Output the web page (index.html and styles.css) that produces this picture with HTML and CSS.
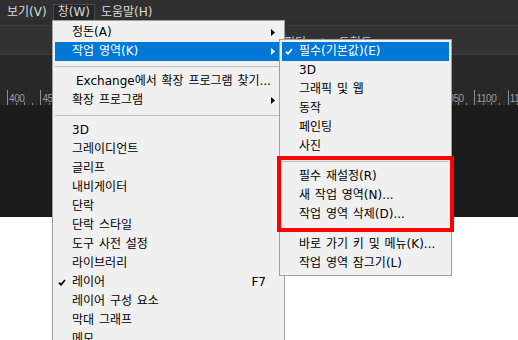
FILE: index.html
```html
<!DOCTYPE html>
<html lang="ko">
<head>
    <meta charset="UTF-8">
    <meta name="viewport" content="width=device-width, initial-scale=1.0">
    <title>창 메뉴 - 작업 영역</title>
    <link rel="stylesheet" href="styles.css">
</head>
<body>
    <div class="app">
        <div class="menubar">
            <span class="menubar-item">보기(V)</span>
            <span class="menubar-item is-open">창(W)</span>
            <span class="menubar-item">도움말(H)</span>
        </div>
        <div class="toolbar-gap"></div>
        <div class="options-bar">
            <span class="options-text">필터</span>
            <span class="options-dot">●</span>
            <span class="options-text">도형도</span>
        </div>
        <div class="tab-area"></div>
        <div class="ruler">
            <span class="ruler-seg">400</span>
            <span class="ruler-seg">450</span>
            <span class="ruler-seg">500</span>
            <span class="ruler-seg">550</span>
            <span class="ruler-seg">600</span>
            <span class="ruler-seg">650</span>
            <span class="ruler-seg">700</span>
            <span class="ruler-seg">750</span>
            <span class="ruler-seg">800</span>
            <span class="ruler-seg">850</span>
            <span class="ruler-seg">900</span>
            <span class="ruler-seg">950</span>
            <span class="ruler-seg">1000</span>
            <span class="ruler-seg">1050</span>
            <span class="ruler-seg">1100</span>
            <span class="ruler-seg">1150</span>
        </div>
        <div class="pasteboard"></div>
        <div class="canvas"></div>
    </div>

    <!-- 창(W) 드롭다운 -->
    <div class="menu menu-main">
        <div class="menu-item"><span class="check"></span><span class="label">정돈(A)</span><svg class="arrow" width="4" height="7" viewBox="0 0 4 7"><path d="M0 0L4 3.5L0 7z"/></svg></div>
        <div class="menu-item is-active"><span class="check"></span><span class="label">작업 영역(K)</span><svg class="arrow" width="4" height="7" viewBox="0 0 4 7"><path d="M0 0L4 3.5L0 7z"/></svg></div>
        <div class="menu-sep"></div>
        <div class="menu-item"><span class="check"></span><span class="label indent">Exchange에서 확장 프로그램 찾기...</span></div>
        <div class="menu-item"><span class="check"></span><span class="label">확장 프로그램</span><svg class="arrow" width="4" height="7" viewBox="0 0 4 7"><path d="M0 0L4 3.5L0 7z"/></svg></div>
        <div class="menu-sep"></div>
        <div class="menu-item"><span class="check"></span><span class="label">3D</span></div>
        <div class="menu-item"><span class="check"></span><span class="label">그레이디언트</span></div>
        <div class="menu-item"><span class="check"></span><span class="label">글리프</span></div>
        <div class="menu-item"><span class="check"></span><span class="label">내비게이터</span></div>
        <div class="menu-item"><span class="check"></span><span class="label">단락</span></div>
        <div class="menu-item"><span class="check"></span><span class="label">단락 스타일</span></div>
        <div class="menu-item"><span class="check"></span><span class="label">도구 사전 설정</span></div>
        <div class="menu-item"><span class="check"></span><span class="label">라이브러리</span></div>
        <div class="menu-item">
            <span class="check"><svg width="8" height="7" viewBox="0 0 8 7"><path d="M1 3.6L3 5.8L7 1" fill="none" stroke="currentColor" stroke-width="1.7"/></svg></span>
            <span class="label">레이어</span><span class="shortcut">F7</span>
        </div>
        <div class="menu-item"><span class="check"></span><span class="label">레이어 구성 요소</span></div>
        <div class="menu-item"><span class="check"></span><span class="label">막대 그래프</span></div>
        <div class="menu-item"><span class="check"></span><span class="label">메모</span></div>
    </div>

    <!-- 작업 영역 하위 메뉴 -->
    <div class="menu menu-sub">
        <div class="menu-item is-active">
            <span class="check"><svg width="8" height="7" viewBox="0 0 8 7"><path d="M1 3.6L3 5.8L7 1" fill="none" stroke="currentColor" stroke-width="1.7"/></svg></span>
            <span class="label">필수(기본값)(E)</span>
        </div>
        <div class="menu-item"><span class="check"></span><span class="label">3D</span></div>
        <div class="menu-item"><span class="check"></span><span class="label">그래픽 및 웹</span></div>
        <div class="menu-item"><span class="check"></span><span class="label">동작</span></div>
        <div class="menu-item"><span class="check"></span><span class="label">페인팅</span></div>
        <div class="menu-item"><span class="check"></span><span class="label">사진</span></div>
        <div class="menu-sep"></div>
        <div class="menu-item"><span class="check"></span><span class="label">필수 재설정(R)</span></div>
        <div class="menu-item"><span class="check"></span><span class="label">새 작업 영역(N)...</span></div>
        <div class="menu-item"><span class="check"></span><span class="label">작업 영역 삭제(D)...</span></div>
        <div class="menu-sep"></div>
        <div class="menu-item"><span class="check"></span><span class="label">바로 가기 키 및 메뉴(K)...</span></div>
        <div class="menu-item"><span class="check"></span><span class="label">작업 영역 잠그기(L)</span></div>
    </div>

    <div class="callout"></div>
</body>
</html>
```

FILE: styles.css
```css
* {
    margin: 0;
    padding: 0;
    box-sizing: border-box;
}

body {
    font-family: 'DejaVu Sans', 'Noto Sans CJK KR', sans-serif;
    font-size: 12px;
    word-spacing: 1px;
    width: 518px;
    height: 340px;
    overflow: hidden;
    position: relative;
    background: #ffffff;
}

.app {
    display: flex;
    flex-direction: column;
    height: 100%;
}

/* 상단 메뉴 막대 */
.menubar {
    height: 20px;
    padding: 4px 0 0 1px;
    background: #303030;
    display: flex;
    color: #dadada;
}

.menubar-item {
    height: 16px;
    line-height: 16px;
    padding: 0 6px;
}

.menubar-item.is-open {
    padding: 0 4px;
    background: #262626;
    border: 1px solid #4b4b4b;
    border-bottom: none;
    line-height: 15px;
}

.toolbar-gap {
    height: 6px;
    background: #2c2c2c;
    border-bottom: 1px solid #3b3b3b;
}

.options-bar {
    height: 29px;
    background: #323232;
    border-bottom: 1px solid #3e3e3e;
    display: flex;
    align-items: center;
    gap: 12px;
    padding: 2px 0 0 284px;
    color: #c8c8c8;
}

.options-dot {
    font-size: 10px;
    color: #bdbdbd;
}

.tab-area {
    height: 35px;
    background: #282828;
}

/* 가로 눈금자 */
.ruler {
    height: 15px;
    background: #282828;
    display: flex;
    padding-left: 7px;
    color: #9c9c9c;
    font-family: 'Liberation Sans', sans-serif;
    font-size: 10px;
    letter-spacing: -0.4px;
}

.ruler-seg {
    flex: 0 0 33.4px;
    border-left: 1px solid #8c8c8c;
    padding: 3px 0 0 1px;
    line-height: 12px;
    background:
        linear-gradient(#8c8c8c, #8c8c8c) 16px 100% / 1px 3px no-repeat,
        linear-gradient(#8c8c8c, #8c8c8c) 24px 100% / 1px 2px no-repeat,
        linear-gradient(#8c8c8c, #8c8c8c) 8px 100% / 1px 2px no-repeat;
}

.pasteboard {
    height: 112px;
    background: #1b1b1b;
}

.canvas {
    flex: 1;
    background: #ffffff;
}

/* 드롭다운 메뉴 */
.menu {
    position: absolute;
    background: #f0f0f0;
    border: 1px solid #a0a0a0;
    padding: 2px;
    color: #000000;
}

.menu-main {
    left: 52px;
    top: 20px;
    width: 233px;
}

.menu-sub {
    left: 279px;
    top: 39px;
    width: 173px;
}

.menu-item {
    height: 19px;
    line-height: 19px;
    display: flex;
    align-items: center;
    white-space: nowrap;
}

.menu-item.is-active {
    background: #0078d7;
    color: #ffffff;
}

.check {
    flex: 0 0 17px;
    display: flex;
    align-items: center;
    padding-left: 3px;
}

.check svg {
    display: block;
}

.label {
    flex: 1;
}

.label.indent {
    padding-left: 4px;
}

.shortcut {
    margin-right: 16px;
}

.arrow {
    flex: none;
    margin-right: 7px;
    fill: #000000;
}

.menu-item.is-active .arrow {
    fill: #ffffff;
}

.menu-sep {
    height: 11px;
    padding-top: 5px;
}

.menu-sep::before {
    content: '';
    display: block;
    height: 1px;
    background: #bdbdbd;
}

/* 빨간 강조 표시 */
.callout {
    position: absolute;
    left: 277px;
    top: 156px;
    width: 177px;
    height: 76px;
    border: 4px solid #ff0000;
}
```
